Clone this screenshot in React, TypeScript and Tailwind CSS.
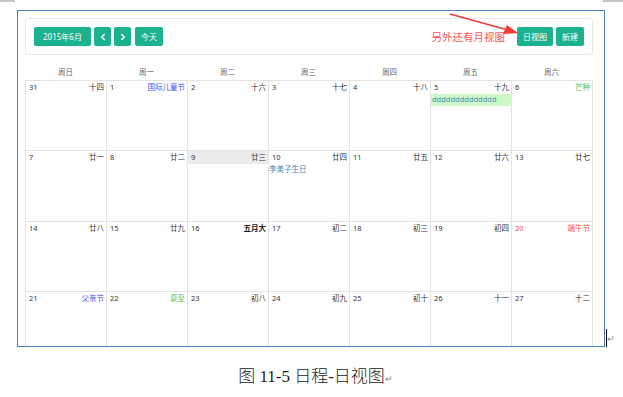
import { ChevronLeft, ChevronRight } from "lucide-react";

type Day = {
  date: string;
  lunar: string;
  lunarClass?: string;
  dateClass?: string;
  today?: boolean;
  event?: { title: string; className: string };
};

const weekDays = ["周日", "周一", "周二", "周三", "周四", "周五", "周六"];

const blue = "text-[#5252f2]";
const green = "text-[#4cc24c]";
const red = "text-[#ff4a4a]";

const weeks: Day[][] = [
  [
    { date: "31", lunar: "十四" },
    { date: "1", lunar: "国际儿童节", lunarClass: blue },
    { date: "2", lunar: "十六" },
    { date: "3", lunar: "十七" },
    { date: "4", lunar: "十八" },
    {
      date: "5",
      lunar: "十九",
      event: {
        title: "dddddddddddddd",
        className: "bg-[#ccf9c6] text-[#4a8fb0] pl-[1px]",
      },
    },
    { date: "6", lunar: "芒种", lunarClass: green },
  ],
  [
    { date: "7", lunar: "廿一" },
    { date: "8", lunar: "廿二" },
    { date: "9", lunar: "廿三", today: true },
    {
      date: "10",
      lunar: "廿四",
      event: { title: "李美子生日", className: "text-[#3d88b8]" },
    },
    { date: "11", lunar: "廿五" },
    { date: "12", lunar: "廿六" },
    { date: "13", lunar: "廿七" },
  ],
  [
    { date: "14", lunar: "廿八" },
    { date: "15", lunar: "廿九" },
    { date: "16", lunar: "五月大", lunarClass: "font-bold text-[#222]" },
    { date: "17", lunar: "初二" },
    { date: "18", lunar: "初三" },
    { date: "19", lunar: "初四" },
    { date: "20", lunar: "端午节", lunarClass: red, dateClass: red },
  ],
  [
    { date: "21", lunar: "父亲节", lunarClass: blue },
    { date: "22", lunar: "夏至", lunarClass: green },
    { date: "23", lunar: "初八" },
    { date: "24", lunar: "初九" },
    { date: "25", lunar: "初十" },
    { date: "26", lunar: "十一" },
    { date: "27", lunar: "十二" },
  ],
];

const rowHeights = ["h-[70px]", "h-[71px]", "h-[70px]", "h-[70px]"];

const Btn = ({ children, className = "" }: { children: React.ReactNode; className?: string }) => (
  <div
    className={`h-[19px] flex items-center justify-center rounded-[2px] bg-[#1cb18f] text-white text-[8px] ${className}`}
  >
    {children}
  </div>
);

export default function App() {
  return (
    <div
      className="relative w-[623px] h-[397px] bg-white overflow-hidden"
      style={{ fontFamily: '"Noto Sans", "Noto Sans CJK SC", sans-serif' }}
    >
      {/* page corner marks */}
      <div className="flex justify-between h-[2px]">
        <div className="w-[15px] h-[2px] bg-[#c4c4c4]" />
        <div className="w-[20px] h-[2px] bg-[#c4c4c4]" />
      </div>

      <div className="ml-[17px] mt-[8px] w-[588px] h-[337px] border border-[#4a7fc1] overflow-hidden pl-[7px] pt-[7px]">
        {/* toolbar */}
        <div className="w-[568px] h-[37px] border border-[#e8e8e8] rounded-[3px] flex items-center justify-between pl-[8px] pr-[8px]">
          <div className="flex items-center gap-[3px]">
            <Btn className="w-[57px]">2015年6月</Btn>
            <Btn className="w-[17px]">
              <ChevronLeft size={10} strokeWidth={3.5} />
            </Btn>
            <Btn className="w-[17px]">
              <ChevronRight size={10} strokeWidth={3.5} />
            </Btn>
            <Btn className="w-[28px] ml-[1px]">今天</Btn>
          </div>
          <div className="flex items-center">
            <span className="text-[10.5px] text-[#ff5252] mr-[12px] mt-[2px]">另外还有月视图</span>
            <Btn className="w-[36px] mr-[3px]">日视图</Btn>
            <Btn className="w-[28px]">新建</Btn>
          </div>
        </div>

        {/* week header */}
        <div className="mt-[11px] grid grid-cols-[repeat(7,81px)] h-[14px]">
          {weekDays.map((d) => (
            <div key={d} className="flex items-center justify-center text-[7.5px] text-[#666]">
              {d}
            </div>
          ))}
        </div>

        {/* grid */}
        <div className="w-[568px] border-l border-t border-[#e3e3e3]">
          {weeks.map((week, wi) => (
            <div key={wi} className={`grid grid-cols-[repeat(7,81px)] ${rowHeights[wi]}`}>
              {week.map((day) => (
                <div key={day.date} className="border-r border-b border-[#e3e3e3] flex flex-col">
                  <div
                    className={`h-[13px] flex items-center justify-between pl-[3px] pr-[2px] text-[7.5px] text-[#333] ${
                      day.today ? "bg-[#ececec]" : ""
                    }`}
                  >
                    <span className={day.dateClass}>{day.date}</span>
                    <span className={day.lunarClass}>{day.lunar}</span>
                  </div>
                  {day.event && (
                    <div className={`h-[12px] flex items-center text-[7.5px] ${day.event.className}`}>
                      {day.event.title}
                    </div>
                  )}
                </div>
              ))}
            </div>
          ))}
        </div>
      </div>

      {/* caption */}
      <div className="mt-[17px] pl-[8px] text-center text-[17px] text-[#222] leading-[22px] font-light">
        <span style={{ fontFamily: '"Noto Sans CJK SC", sans-serif' }}>图</span>
        <span style={{ fontFamily: '"Liberation Serif", serif' }}> 11-5 </span>
        <span style={{ fontFamily: '"Noto Sans CJK SC", sans-serif' }}>日程</span>
        <span style={{ fontFamily: '"Liberation Serif", serif' }}>-</span>
        <span style={{ fontFamily: '"Noto Sans CJK SC", sans-serif' }}>日视图</span>
        <span className="text-[9px] text-[#888] align-baseline">↵</span>
      </div>

      {/* annotation arrow */}
      <svg className="absolute left-0 top-0 pointer-events-none" width="623" height="60">
        <line x1="450" y1="14" x2="508" y2="30" stroke="#f03a3a" strokeWidth="1.6" />
        <polygon points="518,33 503,34 507,25" fill="#f03a3a" />
      </svg>

      {/* text cursor and return mark */}
      <div className="absolute left-[606px] top-[329px] w-[1px] h-[18px] bg-black" />
      <div className="absolute left-[607px] top-[334px] text-[9px] text-[#888] leading-none">↵</div>
    </div>
  );
}
